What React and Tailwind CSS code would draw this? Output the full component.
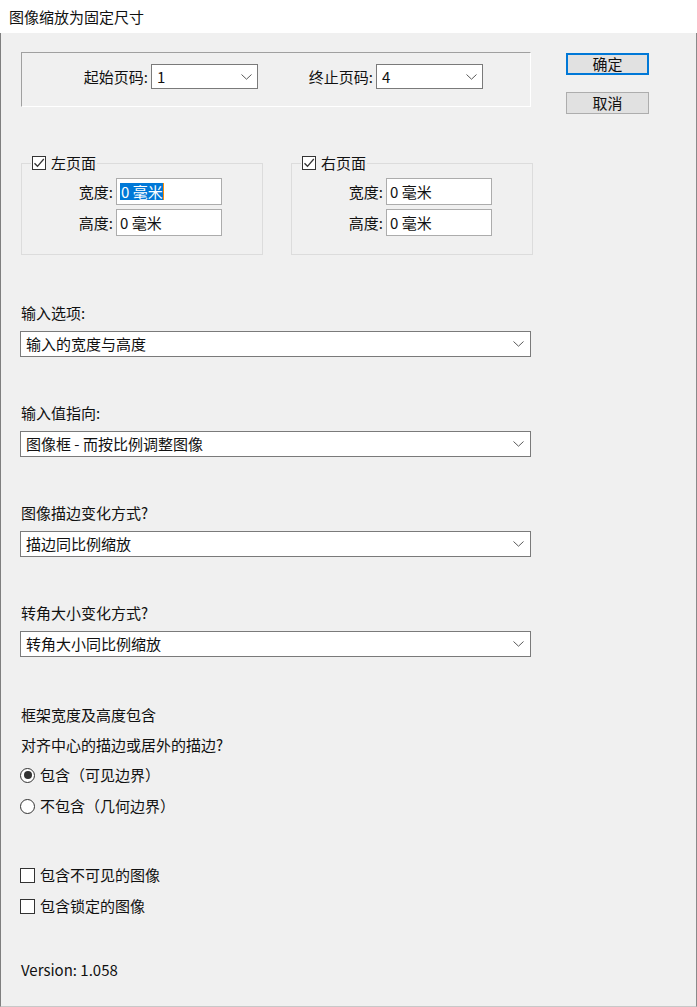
import React from "react";

const Chevron = () => (
  <svg width="11" height="6" viewBox="0 0 11 6" className="shrink-0">
    <path d="M0.5 0.5 L5.5 5.2 L10.5 0.5" fill="none" stroke="#5a5a5a" strokeWidth="1" />
  </svg>
);

const CheckBox = ({ checked, size = "w-[14px] h-[14px]" }) => (
  <span className={`${size} border border-[#333333] bg-white flex items-center justify-center shrink-0`}>
    {checked && (
      <svg width="12" height="12" viewBox="0 0 12 12">
        <path d="M1.5 6.2 L4.5 9.3 L10.8 2" fill="none" stroke="#333333" strokeWidth="1.3" />
      </svg>
    )}
  </span>
);

const Radio = ({ checked }) => (
  <span className="w-[15px] h-[15px] rounded-full border border-[#333333] bg-white flex items-center justify-center shrink-0">
    {checked && <span className="w-[8px] h-[8px] rounded-full bg-[#333333]" />}
  </span>
);

const Combo = ({ value }) => (
  <div className="w-[107px] h-[25px] border border-[#7a7a7a] bg-white flex items-center justify-between pl-[5px] pr-[5px]">
    <span>{value}</span>
    <Chevron />
  </div>
);

const Select = ({ value, className = "" }) => (
  <div className={`w-[511px] h-[26px] ml-[-1px] border border-[#7a7a7a] bg-white flex items-center justify-between pl-[5px] pr-[6px] ${className}`}>
    <span>{value}</span>
    <Chevron />
  </div>
);

const Field = ({ label, children, className = "" }) => (
  <div className={`flex items-center ${className}`}>
    <span className="w-[91px] text-right">{label}</span>
    <div className="ml-[3px] w-[106px] h-[27px] border border-[#acacac] bg-white flex items-center pl-[3px]">
      {children}
    </div>
  </div>
);

const Group = ({ title, selected, className = "" }) => (
  <fieldset className={`w-[242px] h-[100px] border border-[#dcdcdc] ${className}`}>
    <legend className="ml-[9px] px-[1px] flex items-center gap-[5px] leading-[16px]">
      <CheckBox checked />
      <span>{title}</span>
    </legend>
    <Field label="宽度:" className="mt-[7px]">
      {selected ? (
        <span className="flex items-center">
          <span className="bg-[#0078d7] text-white leading-[17px] pl-[1px]">0 毫米</span>
          <span className="w-[1px] h-[17px] bg-[#ff8c00]" />
        </span>
      ) : (
        <span>0 毫米</span>
      )}
    </Field>
    <Field label="高度:" className="mt-[4px]">
      <span>0 毫米</span>
    </Field>
  </fieldset>
);

export default function App() {
  return (
    <div className="w-[697px] h-[1007px] bg-[#f0f0f0] text-[15px] leading-[20px] text-[#111111] font-['Microsoft_YaHei','Noto_Sans_CJK_SC',sans-serif] flex flex-col overflow-hidden">
      <div className="h-[33px] bg-white flex items-center pl-[9px] shrink-0">图像缩放为固定尺寸</div>
      <div className="flex-1 border-l border-r border-b border-l-[#7f7f7f] border-r-[#8a8a8a] border-b-[#c8c8c8] pl-[20px] flex flex-col">
        {/* top row */}
        <div className="flex items-start pt-[19px]">
          <div className="w-[510px] h-[55px] border-t border-l border-[#a0a0a0] border-b border-r border-b-white border-r-white flex items-start pt-[11px] pl-[59px]">
            <span className="leading-[25px] w-[67px] text-right">起始页码:</span>
            <div className="ml-[3px]">
              <Combo value="1" />
            </div>
            <span className="leading-[25px] ml-[47px] w-[68px] text-right">终止页码:</span>
            <div className="ml-[3px]">
              <Combo value="4" />
            </div>
          </div>
          <div className="ml-[35px] pt-[1px] flex flex-col">
            <button className="w-[83px] h-[22px] border-2 border-[#0078d7] bg-[#e1e1e1] flex items-center justify-center leading-[18px]">
              确定
            </button>
            <button className="mt-[17px] w-[83px] h-[22px] border border-[#adadad] bg-[#e1e1e1] flex items-center justify-center leading-[18px]">
              取消
            </button>
          </div>
        </div>

        {/* groups */}
        <div className="flex mt-[41px]">
          <Group title="左页面" selected />
          <Group title="右页面" className="ml-[28px]" />
        </div>

        <div className="mt-[48px]">输入选项:</div>
        <Select value="输入的宽度与高度" className="mt-[8px]" />

        <div className="mt-[46px]">输入值指向:</div>
        <Select value="图像框 - 而按比例调整图像" className="mt-[8px]" />

        <div className="mt-[46px]">图像描边变化方式?</div>
        <Select value="描边同比例缩放" className="mt-[8px]" />

        <div className="mt-[46px]">转角大小变化方式?</div>
        <Select value="转角大小同比例缩放" className="mt-[8px]" />

        <div className="mt-[48px]">框架宽度及高度包含</div>
        <div className="mt-[10px]">对齐中心的描边或居外的描边?</div>
        <div className="mt-[10px] flex items-center gap-[5px] ml-[-1px]">
          <Radio checked />
          <span>包含（可见边界）</span>
        </div>
        <div className="mt-[11px] flex items-center gap-[5px] ml-[-1px]">
          <Radio />
          <span>不包含（几何边界）</span>
        </div>

        <div className="mt-[49px] flex items-center gap-[5px] ml-[-1px]">
          <CheckBox size="w-[15px] h-[15px]" />
          <span>包含不可见的图像</span>
        </div>
        <div className="mt-[11px] flex items-center gap-[5px] ml-[-1px]">
          <CheckBox size="w-[15px] h-[15px]" />
          <span>包含锁定的图像</span>
        </div>

        <div className="mt-[44px]">Version: 1.058</div>
      </div>
    </div>
  );
}
